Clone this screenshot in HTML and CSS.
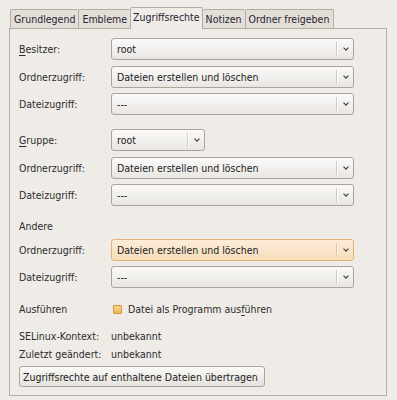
FILE: index.html
```html
<!DOCTYPE html>
<html lang="de">
<head>
  <meta charset="UTF-8" />
  <title>Eigenschaften</title>
  <link rel="stylesheet" href="styles.css">
</head>
<body>
  <div class="tabs">
    <div class="tab">Grundlegend</div>
    <div class="tab">Embleme</div>
    <div class="tab active">Zugriffsrechte</div>
    <div class="tab">Notizen</div>
    <div class="tab">Ordner freigeben</div>
  </div>

  <div class="panel">
    <div class="group">
      <div class="row">
        <span class="label"><u>B</u>esitzer:</span>
        <div class="combo wide"><span>root</span><i class="arrow"></i></div>
      </div>
      <div class="row">
        <span class="label">Ordnerzugriff:</span>
        <div class="combo wide"><span>Dateien erstellen und löschen</span><i class="arrow"></i></div>
      </div>
      <div class="row">
        <span class="label">Dateizugriff:</span>
        <div class="combo wide"><span>---</span><i class="arrow"></i></div>
      </div>
    </div>

    <div class="group gap-group">
      <div class="row">
        <span class="label"><u>G</u>ruppe:</span>
        <div class="combo small"><span>root</span><i class="arrow"></i></div>
      </div>
      <div class="row">
        <span class="label">Ordnerzugriff:</span>
        <div class="combo wide"><span>Dateien erstellen und löschen</span><i class="arrow"></i></div>
      </div>
      <div class="row">
        <span class="label">Dateizugriff:</span>
        <div class="combo wide"><span>---</span><i class="arrow"></i></div>
      </div>
    </div>

    <div class="group gap-other">
      <div class="heading">Andere</div>
      <div class="row">
        <span class="label">Ordnerzugriff:</span>
        <div class="combo wide hover"><span>Dateien erstellen und löschen</span><i class="arrow"></i></div>
      </div>
      <div class="row">
        <span class="label">Dateizugriff:</span>
        <div class="combo wide"><span>---</span><i class="arrow"></i></div>
      </div>
    </div>

    <div class="line exec">
      <span class="label">Ausführen</span>
      <label class="check"><span class="box"></span>Datei als Programm aus<u>f</u>ühren</label>
    </div>

    <div class="line info">
      <span class="label">SELinux-Kontext:</span>
      <span>unbekannt</span>
    </div>
    <div class="line">
      <span class="label">Zuletzt geändert:</span>
      <span>unbekannt</span>
    </div>

    <button class="apply">Zugriffsrechte auf enthaltene Dateien übertragen</button>
  </div>
</body>
</html>
```

FILE: styles.css
```css
* { box-sizing: border-box; }
body {
  margin: 0;
  padding: 6px 0 0 9px;
  font-family: "DejaVu Sans Condensed", "DejaVu Sans", sans-serif;
  font-size: 10.5px;
  color: #2c2c2c;
  background-color: #efebe7;
}
u { text-decoration-thickness: 1px; text-underline-offset: 2px; }

/* tabs */
.tabs { display: flex; align-items: flex-end; padding-left: 1px; height: 22px; }
.tab {
  height: 19px; line-height: 18px; padding: 0 3px;
  background: #e3ded8;
  border: 1px solid #b3ada5; border-bottom: none; border-right: none;
  border-radius: 2px 2px 0 0;
  color: #2a2233;
}
.tab:nth-child(5) { border-right: 1px solid #b3ada5; padding-right: 4px; }
.tab.active {
  height: 22px; line-height: 19px; margin-bottom: -1px;
  background: #efebe7; border-right: 1px solid #b3ada5;
  position: relative; z-index: 1; padding: 0 2px;
}
.tab.active + .tab { border-left: none; }

/* panel */
.panel {
  width: 378px; height: 368px;
  border: 1px solid #b3ada5;
  padding: 9px 9px 0;
  display: flex; flex-direction: column;
}
.group { display: flex; flex-direction: column; gap: 5.5px; }
.gap-group { margin-top: 14px; }
.gap-other { margin-top: 12px; gap: 4.5px; }
.gap-other .row + .row { margin-top: 1px; }
.row { display: flex; align-items: center; height: 22px; }
.label { width: 92px; flex-shrink: 0; }
.heading { height: 16px; line-height: 16px; }

/* combo boxes */
.combo {
  height: 22px; position: relative;
  display: flex; align-items: center;
  padding-left: 5px;
  border: 1px solid #aaa49c; border-radius: 3px;
  background: linear-gradient(#fbfaf9, #e9e6e2);
  color: #222;
}
.combo.wide { width: 243px; }
.combo.small { width: 94px; }
.combo::after {
  content: ""; position: absolute; top: 3px; bottom: 3px; right: 16px;
  border-left: 1px solid #cfcac3; box-shadow: 1px 0 0 #fff;
}
.combo .arrow {
  position: absolute; right: 5px; top: 7px;
  width: 4px; height: 4px;
  border-right: 1.3px solid #333; border-bottom: 1.3px solid #333;
  transform: rotate(45deg);
}
.combo.hover {
  border-color: #e2b07a;
  background: linear-gradient(#fcecd8, #f7ddbc);
}
.combo.hover::after { border-left-color: #e8c49c; box-shadow: 1px 0 0 #fdf1e2; }

/* rest */
.line { display: flex; align-items: center; height: 16px; }
.exec { margin-top: 13px; }
.info { margin-top: 11px; }
.info + .line { margin-top: 2px; }
.check { display: flex; align-items: center; margin-left: 2px; }
.check .box {
  width: 9px; height: 9px; margin-right: 6px;
  border: 1px solid #d0953f; border-radius: 1px;
  background: linear-gradient(#fbd58f, #f2b757);
}
.apply {
  align-self: flex-start;
  margin-top: 4px; height: 21px; width: 246px;
  padding: 0 3px;
  font: inherit; color: #222; white-space: nowrap;
  border: 1px solid #aaa49c; border-radius: 3px;
  background: linear-gradient(#faf9f7, #e6e2dd);
  text-align: left;
}
```
